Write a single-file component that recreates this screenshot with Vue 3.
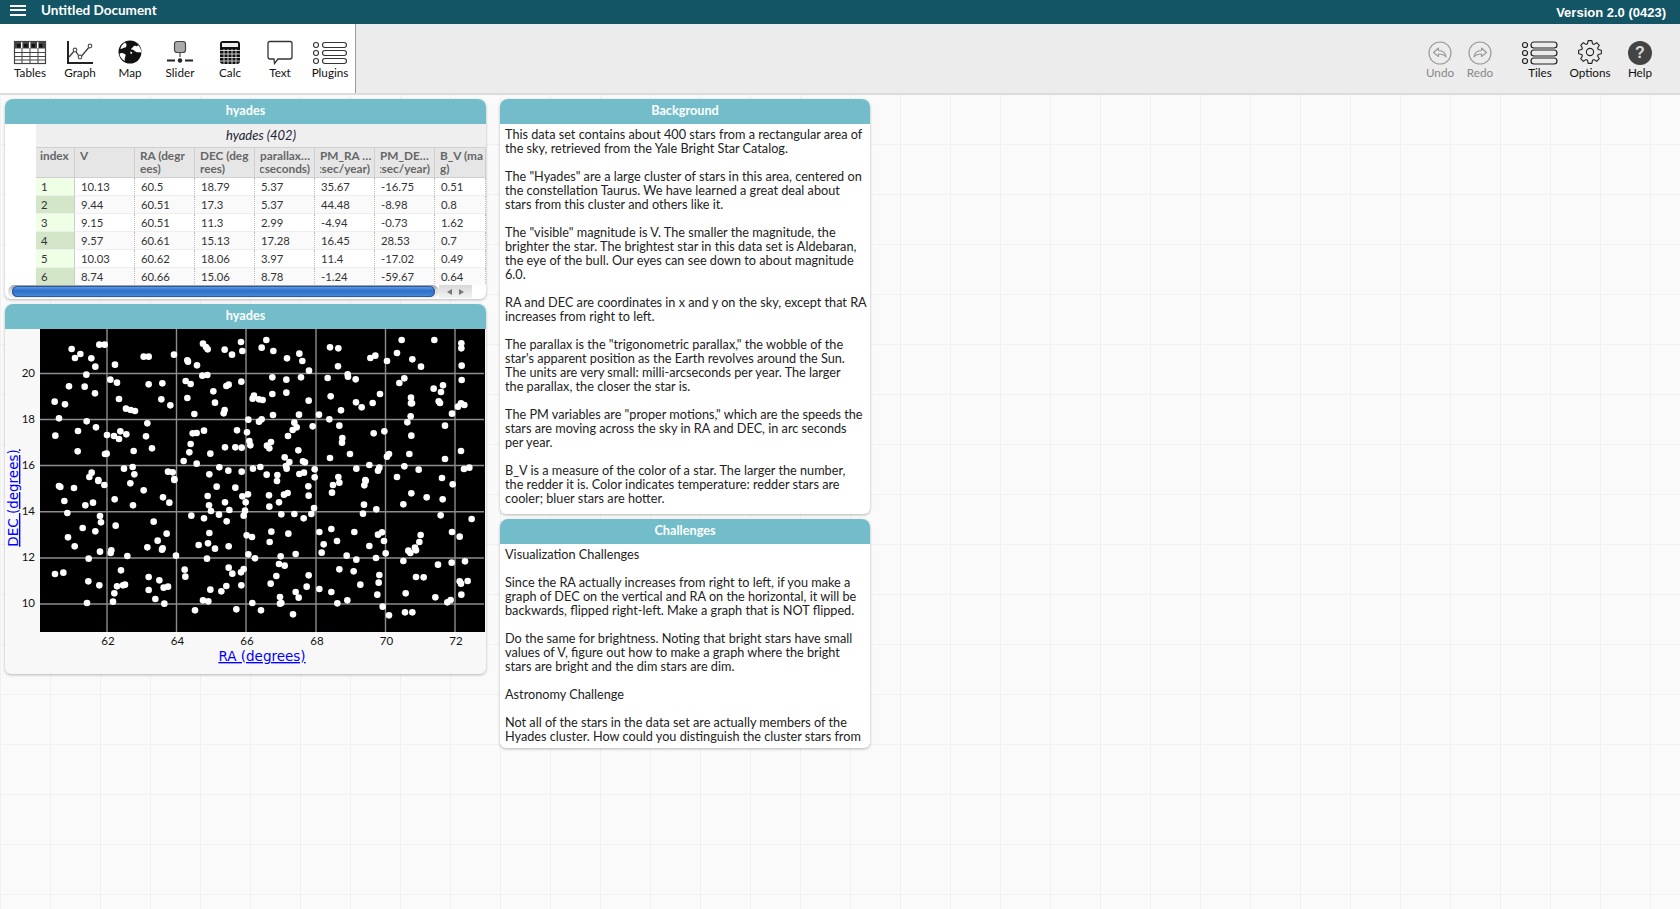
<script setup>
const A = [215,147,241,162,225,174,274,175,286,200,298,134,314,134,345,194,431,170,446,170,522,164,562,181,564,185,591,196,609,131,618,141,623,148,674,149,696,164,259,224,607,227,622,225,331,239,351,248,207,259,254,260,446,253,487,250,557,243,572,252,640,274,679,258,686,254,285,280,357,297,484,298,562,294,164,305,195,313,511,316,645,308,378,326,392,330,405,333,674,330,671,340,583,342,177,355,260,364,442,370,288,382,234,393,361,394,379,403,612,392,590,399,578,400,711,391,166,407,321,405,342,408,357,417,438,409,572,432,675,442,706,442,456,445,233,454,401,453,568,457,631,461,315,462,320,461,551,483,590,491,398,501,372,506,658,502,685,512,504,515,518,517,275,518,403,523,628,523,268,531,295,540,523,537]
const B = [79,120,3,126,65,143,7,153,100,153,141,175,178,161,187,183,270,142,295,145,391,174,406,167,441,183,471,159,485,120,517,178,583,120,543,200,664,130,664,145,665,197,294,199,207,212,323,223,324,230,97,232,139,239,183,232,263,234,347,238,493,235,478,249,665,240,4,245,581,266,609,256,603,276,97,282,139,278,42,287,38,296,57,298,68,300,272,289,206,302,348,307,365,322,398,309,420,282,513,293,513,310,516,310,596,304,600,309,663,310,654,320,673,315,303,331,636,341,99,345,177,344,237,344,512,349,25,359,65,358,57,365,268,358,163,368,502,367,298,377,170,382,218,379,158,390,615,377,21,397,401,400,433,394,144,408,514,407,307,414,306,428,28,423,31,436,93,426,81,437,88,445,5,443,175,451,663,453,134,472,270,474,330,462,447,462,441,470,508,462,615,477,148,486,189,484,195,487,388,495,418,503,414,512,493,499,536,509,39,506,61,501,138,498,140,506,224,508,349,506,672,507,688,503,80,524,112,525,178,522,192,518,5,515,224,532,295,531,471,531,606,534,376,540]
const C = [177,18,181,21,222,24,295,3,313,15,391,10,431,31,523,0,650,20,706,23,623,48,489,52,344,58,193,63,279,68,256,76,399,76,508,68,675,67,627,76,688,90,633,93,202,99,300,108,574,107,657,104,612,115,303,127,461,125,680,124,347,137,248,144,286,154,500,161,628,159,204,172,473,182,224,199,596,195,624,190,686,199,442,202,488,205,486,209,645,206,334,211,332,219,300,215,382,228,528,227,266,236,621,236,686,263,363,271,554,269,165,282,190,278,697,281,446,291,556,290,478,301,265,304,298,316,351,319,369,316,375,314,491,323,504,320,664,334,679,318,631,329,446,330,343,340,466,357,609,361,625,364,261,369,339,365,493,371,585,391,709,388]
const D = [111,3,205,19,279,15,298,8,373,16,377,3,638,13,7,49,24,43,87,46,132,44,143,39,206,47,276,38,514,40,560,52,608,58,17,67,117,67,88,80,372,74,490,73,222,84,15,92,409,88,11,107,124,103,163,102,214,102,369,101,602,106,191,115,695,117,238,156,94,155,145,161,274,147,343,156,426,157,414,164,636,156,659,170,542,165,20,166,36,171,291,183,432,183,538,186,89,186,251,193,388,198,525,203,528,211,505,212,511,219,245,218,437,220,167,222,320,227,25,223,122,229,45,235,349,239,408,234,117,252,134,257,490,243,594,254,635,248,675,244,11,267,298,268,341,274,3,277,206,286,109,288,418,285,528,291,551,292,416,308,92,311,361,314,200,320,659,304,663,311,683,303,4,316,238,327,274,336,167,336,412,344,497,340,664,344,120,351,176,353,586,352,632,360,622,367,37,369,120,371,124,369,292,370,322,361,428,380,63,391,159,403,447,406,495,397,517,397]

// Each list holds zoomed positions read from one region of the chart.
const toDots = (list, ox, oy) => {
  const out = []
  for (let i = 0; i < list.length; i += 2) out.push({ x: ox + list[i] / 3 - 5, y: oy + list[i + 1] / 3 - 329 })
  return out
}
const dots = [...toDots(A, 0, 300), ...toDots(B, 240, 300), ...toDots(C, 0, 480), ...toDots(D, 240, 480)]

const xTicks = [{ v: 62, x: 102 }, { v: 64, x: 171.5 }, { v: 66, x: 241 }, { v: 68, x: 311 }, { v: 70, x: 380.5 }, { v: 72, x: 450 }]
const yTicks = [{ v: 20, y: 44.5 }, { v: 18, y: 90.5 }, { v: 16, y: 136.5 }, { v: 14, y: 182.7 }, { v: 12, y: 229 }, { v: 10, y: 275 }]

const columns = [
  { a: 'index', w: 39 },
  { a: 'V', w: 60 },
  { a: 'RA (degr', b: 'ees)', w: 60 },
  { a: 'DEC (deg', b: 'rees)', w: 60 },
  { a: 'parallax…', b: 'arcseconds)', clip: true, w: 60 },
  { a: 'PM_RA …', b: 'arcsec/year)', clip: true, w: 60 },
  { a: 'PM_DE…', b: 'arcsec/year)', clip: true, w: 60 },
  { a: 'B_V (ma', b: 'g)', w: 51 }
]
const rows = [
  ['1', '10.13', '60.5', '18.79', '5.37', '35.67', '-16.75', '0.51'],
  ['2', '9.44', '60.51', '17.3', '5.37', '44.48', '-8.98', '0.8'],
  ['3', '9.15', '60.51', '11.3', '2.99', '-4.94', '-0.73', '1.62'],
  ['4', '9.57', '60.61', '15.13', '17.28', '16.45', '28.53', '0.7'],
  ['5', '10.03', '60.62', '18.06', '3.97', '11.4', '-17.02', '0.49'],
  ['6', '8.74', '60.66', '15.06', '8.78', '-1.24', '-59.67', '0.64']
]

const background = `This data set contains about 400 stars from a rectangular area of
the sky, retrieved from the Yale Bright Star Catalog.

The "Hyades" are a large cluster of stars in this area, centered on
the constellation Taurus. We have learned a great deal about
stars from this cluster and others like it.

The "visible" magnitude is V. The smaller the magnitude, the
brighter the star. The brightest star in this data set is Aldebaran,
the eye of the bull. Our eyes can see down to about magnitude
6.0.

RA and DEC are coordinates in x and y on the sky, except that RA
increases from right to left.

The parallax is the "trigonometric parallax," the wobble of the
star's apparent position as the Earth revolves around the Sun.
The units are very small: milli-arcseconds per year. The larger
the parallax, the closer the star is.

The PM variables are "proper motions," which are the speeds the
stars are moving across the sky in RA and DEC, in arc seconds
per year.

B_V is a measure of the color of a star. The larger the number,
the redder it is. Color indicates temperature: redder stars are
cooler; bluer stars are hotter.`

const challenges = `Visualization Challenges

Since the RA actually increases from right to left, if you make a
graph of DEC on the vertical and RA on the horizontal, it will be
backwards, flipped right-left. Make a graph that is NOT flipped.

Do the same for brightness. Noting that bright stars have small
values of V, figure out how to make a graph where the bright
stars are bright and the dim stars are dim.

Astronomy Challenge

Not all of the stars in the data set are actually members of the
Hyades cluster. How could you distinguish the cluster stars from`

const leftTools = ['Tables', 'Graph', 'Map', 'Slider', 'Calc', 'Text', 'Plugins']

// Gear outline with eight teeth.
const gear = (() => {
  const pts = []
  for (let i = 0; i < 8; i++) {
    const c = (i * Math.PI) / 4 - Math.PI / 2
    for (const [r, d] of [[8.6, -0.3], [11.5, -0.16], [11.5, 0.16], [8.6, 0.3]]) {
      pts.push(`${(13 + r * Math.cos(c + d)).toFixed(2)} ${(13 + r * Math.sin(c + d)).toFixed(2)}`)
    }
  }
  return 'M' + pts.join('L') + 'Z'
})()
</script>

<template>
  <div class="app">
    <header class="topbar">
      <div class="burger"><i></i><i></i><i></i></div>
      <span class="doc">Untitled Document</span>
      <span class="version">Version 2.0 (0423)</span>
    </header>

    <nav class="toolbar">
      <div class="tools">
        <div v-for="t in leftTools" :key="t" class="tool">
          <svg v-if="t === 'Tables'" width="34" height="26" viewBox="0 0 34 26">
            <rect x="1.5" y="2.5" width="31" height="22" fill="#fff" stroke="#444" stroke-width="1.2" />
            <rect x="2" y="3" width="30" height="6.5" fill="#444" />
            <g fill="#fff"><rect x="8" y="3" width="1.4" height="7" /><rect x="16" y="3" width="1.4" height="7" /><rect x="24" y="3" width="1.4" height="7" /></g>
            <g fill="#111"><rect x="4" y="5" width="3.5" height="3.5" /><rect x="11" y="5" width="3.5" height="3.5" /><rect x="18.5" y="5" width="3.5" height="3.5" /><rect x="26" y="5" width="3.5" height="3.5" /></g>
            <path d="M2 13.5H32M2 17.5H32M2 21H32M9 9V24M17 9V24M25 9V24" stroke="#444" stroke-width="1" fill="none" />
          </svg>
          <svg v-else-if="t === 'Graph'" width="28" height="26" viewBox="0 0 28 26">
            <path d="M2 2V24H27" stroke="#222" stroke-width="2" fill="none" />
            <path d="M3 18L9 11L14 19L24 7" stroke="#333" stroke-width="1.2" fill="none" />
            <g fill="#fff" stroke="#555" stroke-width="1.2"><circle cx="9" cy="11" r="1.8" /><circle cx="14" cy="18" r="1.8" /><circle cx="24" cy="7" r="1.8" /></g>
          </svg>
          <svg v-else-if="t === 'Map'" width="26" height="26" viewBox="0 0 26 26">
            <circle cx="13" cy="13" r="11.5" fill="#111" />
            <path d="M8 3.5C6 5 3.5 7 3.5 10C5.5 9.5 7 8 8.5 8.5C10 7 10 5 8 3.5ZM2.5 15C4 13 7 14 8.5 15.5C9 18 7 18.5 8 22C5 20.5 3 18 2.5 15ZM16 8C17 6.5 19 6.5 20 7.5L21 6C23 8 24.5 11 24.5 14C22.5 12.5 20.5 14 18.5 12.5C16.5 11.5 17 10 14 10.5C14 9.5 15 9 16 8Z" fill="#fff" />
            <path d="M13 12.5L15.5 13.5L14 15.5Z" fill="#fff" />
          </svg>
          <svg v-else-if="t === 'Slider'" width="28" height="26" viewBox="0 0 28 26">
            <rect x="8.5" y="2.5" width="11" height="11" rx="2.5" fill="#aaa" stroke="#444" stroke-width="1.2" />
            <path d="M14 14V18" stroke="#444" stroke-width="1.2" />
            <path d="M1 21.5H9M19 21.5H27" stroke="#222" stroke-width="2" />
            <circle cx="14" cy="21.5" r="2.2" fill="#222" />
          </svg>
          <svg v-else-if="t === 'Calc'" width="22" height="26" viewBox="0 0 22 26">
            <rect x="1" y="2" width="20" height="23" rx="3" fill="#111" />
            <rect x="3" y="4" width="16" height="4" fill="#eee" />
            <path d="M1 11.5H21M1 15H21M1 18.5H21M1 22H21M5 10V25M9 10V25M13 10V25M17 10V25" stroke="#ddd" stroke-width="0.9" />
          </svg>
          <svg v-else-if="t === 'Text'" width="28" height="26" viewBox="0 0 28 26">
            <path d="M4 2.5H24Q26 2.5 26 4.5V18Q26 20 24 20H12L8.5 24.5L8 20H4Q2 20 2 18V4.5Q2 2.5 4 2.5Z" fill="#fff" stroke="#333" stroke-width="1.3" />
          </svg>
          <svg v-else width="38" height="26" viewBox="0 0 38 26">
            <g fill="#fff" stroke="#333" stroke-width="1.1">
              <circle cx="5" cy="6" r="2.5" /><circle cx="5" cy="14" r="2.5" /><circle cx="5" cy="22" r="2.5" />
              <rect x="11.5" y="3.5" width="24" height="5" rx="2.5" /><rect x="11.5" y="11.5" width="24" height="5" rx="2.5" /><rect x="11.5" y="19.5" width="24" height="5" rx="2.5" />
            </g>
          </svg>
          <span>{{ t }}</span>
        </div>
      </div>

      <div class="tools-right">
        <div class="tool narrow muted">
          <svg width="26" height="26" viewBox="0 0 26 26">
            <circle cx="13" cy="14" r="11" fill="none" stroke="#999" stroke-width="1.1" />
            <path d="M11.5 9L6.5 13.5L11.5 17.5V15C15 15 17 15.5 19 18C18.5 14 16 11.5 11.5 11.5Z" fill="none" stroke="#999" stroke-width="1.1" stroke-linejoin="round" />
          </svg>
          <span>Undo</span>
        </div>
        <div class="tool narrow muted">
          <svg width="26" height="26" viewBox="0 0 26 26">
            <circle cx="13" cy="14" r="11" fill="none" stroke="#999" stroke-width="1.1" />
            <path d="M14.5 9L19.5 13.5L14.5 17.5V15C11 15 9 15.5 7 18C7.5 14 10 11.5 14.5 11.5Z" fill="none" stroke="#999" stroke-width="1.1" stroke-linejoin="round" />
          </svg>
          <span>Redo</span>
        </div>
        <div class="tool first">
          <svg width="38" height="26" viewBox="0 0 38 26">
            <g fill="none" stroke="#222" stroke-width="1.2">
              <circle cx="4" cy="6" r="2.5" /><circle cx="4" cy="14" r="2.5" /><circle cx="4" cy="22" r="2.5" />
              <rect x="10" y="3" width="26" height="6" rx="3" /><rect x="10" y="11" width="26" height="6" rx="3" /><rect x="10" y="19" width="26" height="6" rx="3" />
            </g>
          </svg>
          <span>Tiles</span>
        </div>
        <div class="tool">
          <svg width="26" height="26" viewBox="0 0 26 26">
            <path :d="gear" fill="none" stroke="#222" stroke-width="1.1" stroke-linejoin="round" />
            <circle cx="13" cy="13" r="3.6" fill="none" stroke="#222" stroke-width="1.1" />
          </svg>
          <span>Options</span>
        </div>
        <div class="tool">
          <div class="help">?</div>
          <span>Help</span>
        </div>
      </div>
    </nav>

    <main class="canvas">
      <section class="tile table-tile">
        <h2>hyades</h2>
        <div class="table-wrap">
          <div class="case-title">hyades (402)</div>
          <div class="head-row">
            <div v-for="c in columns" :key="c.a" class="hcell" :style="{ width: c.w + 'px' }">
              <span>{{ c.a }}</span>
              <span v-if="c.b" :class="{ clip: c.clip }"><b>{{ c.b }}</b></span>
            </div>
          </div>
          <div v-for="(r, i) in rows" :key="r[0]" class="row" :class="{ odd: i % 2 }">
            <div v-for="(v, j) in r" :key="j" class="cell" :class="{ idx: j === 0 }" :style="{ width: columns[j].w + 'px' }">{{ v }}</div>
          </div>
        </div>
        <div class="scrollbar">
          <div class="track"><div class="thumb"></div></div>
          <div class="arrows"><span class="al"></span><span class="ar"></span></div>
        </div>
      </section>

      <section class="tile graph-tile">
        <h2>hyades</h2>
        <svg class="chart" width="481" height="345" viewBox="0 0 481 345">
          <rect x="35" y="0" width="445" height="303" fill="#000" />
          <line v-for="t in xTicks" :key="t.v" :x1="t.x" :x2="t.x" y1="0" y2="303" stroke="#8d8d8d" stroke-width="1.4" />
          <line v-for="t in yTicks" :key="t.v" x1="35" x2="479" :y1="t.y" :y2="t.y" stroke="#8d8d8d" stroke-width="1.4" />
          <svg x="35" y="0" width="445" height="303" viewBox="35 0 445 303">
            <circle v-for="(d, i) in dots" :key="i" :cx="d.x" :cy="d.y" r="3.3" fill="#fff" />
          </svg>
          <text v-for="t in xTicks" :key="t.v" :x="t.x + 1" y="316" class="tick" text-anchor="middle">{{ t.v }}</text>
          <text v-for="t in yTicks" :key="t.v" x="30" :y="t.y + 3" class="tick" text-anchor="end">{{ t.v }}</text>
          <text x="257" y="332" class="axis" text-anchor="middle">RA (degrees)</text>
          <text transform="translate(13 169) rotate(-90)" class="axis" text-anchor="middle">DEC (degrees)</text>
        </svg>
      </section>

      <section class="tile text-tile bg-tile">
        <h2>Background</h2>
        <div class="text-body">{{ background }}</div>
      </section>

      <section class="tile text-tile ch-tile">
        <h2>Challenges</h2>
        <div class="text-body">{{ challenges }}</div>
      </section>
    </main>
  </div>
</template>

<style>
html, body { margin: 0; height: 100%; overflow: hidden; }
</style>

<style scoped>
.app {
  width: 1680px;
  height: 909px;
  display: flex;
  flex-direction: column;
  overflow: hidden;
  font-family: Lato, "Open Sans", sans-serif;
  color: #222;
}
.topbar {
  height: 24px;
  flex: none;
  background: #135565;
  display: flex;
  align-items: center;
  color: #fff;
  padding: 0 14px 0 10px;
}
.burger { width: 16px; display: flex; flex-direction: column; gap: 2.5px; margin-right: 15px; margin-top: -4px; }
.burger i { display: block; height: 2px; background: #fff; }
.doc { font-size: 13.5px; font-weight: 700; margin-top: -5px; }
.version { margin-left: auto; font: bold 13px "Liberation Sans", sans-serif; }

.toolbar {
  height: 69px;
  flex: none;
  background: #ececec;
  border-bottom: 2px solid #dcdcdc;
  display: flex;
  justify-content: space-between;
}
.tools {
  display: flex;
  background: #fff;
  padding-left: 5px;
  border-right: 1px solid #999;
  width: 350px;
}
.tools-right { display: flex; padding-right: 15px; }
.tool {
  width: 50px;
  padding-top: 15px;
  display: flex;
  flex-direction: column;
  align-items: center;
  font-size: 11.7px;
  line-height: 13px;
  color: #111;
}
.tool svg, .help { flex: none; height: 26px; margin-bottom: 1px; }
.tool.narrow { width: 40px; }
.tool.muted { color: #888; }
.tool.first { margin-left: 15px; }
.help {
  width: 24px;
  height: 24px;
  margin-top: 2px;
  border-radius: 50%;
  background: #444;
  color: #ddd;
  font: bold 16px/24px "Liberation Sans", sans-serif;
  text-align: center;
}

.canvas {
  position: relative;
  flex: 1;
  background-color: #fafafa;
  background-image:
    linear-gradient(to right, #f1f1f1 1px, transparent 1px),
    linear-gradient(to bottom, #f1f1f1 1px, transparent 1px);
  background-size: 50px 50px;
  background-position: 0 -1px;
}

.tile {
  position: absolute;
  background: #fff;
  border-radius: 8px 8px 6px 6px;
  box-shadow: 0 1px 3px rgba(0, 0, 0, 0.28);
  overflow: hidden;
  display: flex;
  flex-direction: column;
}
.tile h2 {
  flex: none;
  margin: 0;
  height: 25px;
  background: #72bdc9;
  color: #fff;
  font-size: 12.7px;
  font-weight: 700;
  line-height: 23px;
  text-align: center;
}
.table-tile { left: 5px; top: 4px; width: 481px; height: 200px; }
.graph-tile { left: 5px; top: 209px; width: 481px; height: 370px; background: #f8f8f8; }
.bg-tile { left: 500px; top: 4px; width: 370px; height: 415px; }
.ch-tile { left: 500px; top: 424px; width: 370px; height: 229px; }

.table-wrap { flex: 1; padding-left: 31px; overflow: hidden; font-size: 11.3px; }
.case-title {
  height: 23px;
  line-height: 23px;
  background: #efefef;
  text-align: center;
  font-style: italic;
  font-size: 13px;
  color: #223;
}
.head-row { display: flex; height: 31px; background: #e6e6e6; border-top: 1px solid #cfcfcf; border-bottom: 1px solid #cfcfcf; box-sizing: border-box; font-size: 11.8px; }
.hcell {
  flex: none;
  box-sizing: border-box;
  padding: 1px 4px 0 5px;
  border-right: 1px solid #cfcfcf;
  line-height: 13px;
  font-weight: 700;
  color: #666;
  overflow: hidden;
  display: flex;
  flex-direction: column;
}
.hcell:first-child { padding-left: 4px; }
.hcell span { display: block; white-space: nowrap; }
.hcell b { font-weight: 700; }
.hcell .clip { display: flex; justify-content: flex-end; overflow: hidden; }
.hcell .clip b { flex: none; }
.row { display: flex; height: 18px; background: #fff; }
.row.odd { background: #fafafa; }
.cell {
  flex: none;
  box-sizing: border-box;
  padding-left: 6px;
  line-height: 18px;
  color: #333;
  border-right: 1px dotted #bbb;
  border-bottom: 1px solid #eee;
  white-space: nowrap;
  overflow: hidden;
}
.cell.idx { background: #eeffe6; padding-left: 5px; border-right: 1px solid #ccc; }
.row.odd .cell.idx { background: #d3e6c8; }

.scrollbar { flex: none; height: 14px; display: flex; padding-left: 3px; }
.track {
  width: 431px;
  height: 13px;
  border-radius: 7px;
  background: linear-gradient(#9a9a9a, #dedede 40%, #eee);
  padding: 1px 4px;
  box-sizing: border-box;
}
.thumb {
  height: 11px;
  border-radius: 6px;
  background: linear-gradient(#6ba3e6, #2b6fc9 45%, #4d8ddc);
  box-shadow: inset 0 0 0 1px #2a5a9e;
}
.arrows {
  width: 33px;
  height: 13px;
  background: linear-gradient(#d8d8d8, #f2f2f2);
  display: flex;
  align-items: center;
  justify-content: space-around;
  padding: 0 4px;
  box-sizing: border-box;
}
.al { border: 3px solid transparent; border-left: 0; border-right: 5px solid #777; }
.ar { border: 3px solid transparent; border-right: 0; border-left: 5px solid #777; }

.text-body {
  flex: 1;
  overflow: hidden;
  white-space: pre;
  padding: 3px 0 0 5px;
  font-size: 12.7px;
  line-height: 14px;
  color: #222;
}
.chart { display: block; }
.tick { font-size: 11.5px; fill: #111; }
.axis { font: 13.5px "DejaVu Sans", sans-serif; fill: #0000ff; text-decoration: underline; }
</style>
